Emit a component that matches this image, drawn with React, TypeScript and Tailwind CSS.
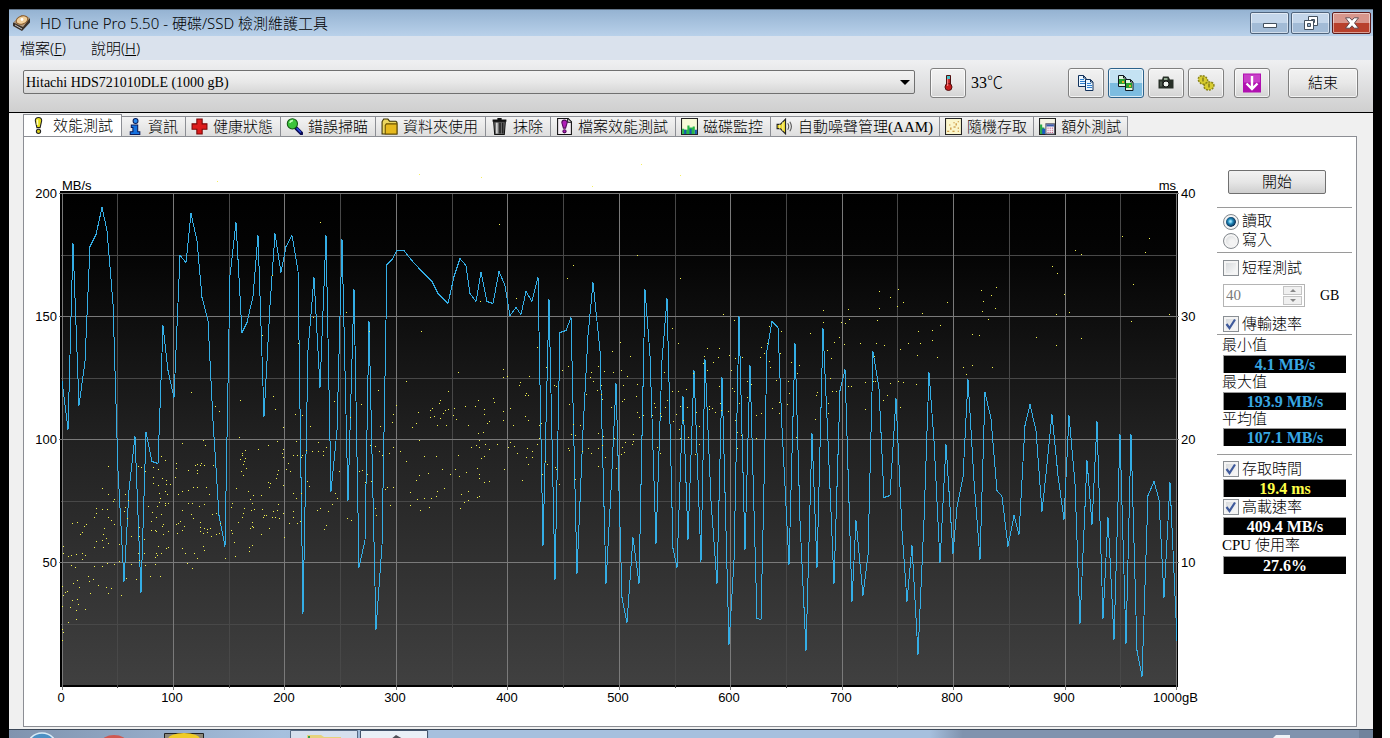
import React, { useState } from 'react';

const sans = "font-['Noto_Sans','Noto_Sans_CJK_TC',sans-serif]";
const serif = "font-light font-['Liberation_Serif','Noto_Sans_CJK_TC',serif]";

const SPEED =
  '62,380 68,429 73,243 79,405 85,361 90,246 96,234 102,207 107,230 113,303 118,470 124,581 129,490 135,436 141,592 146,432 152,461 158,463 163,325 168,370 174,397 180,255 186,262 191,213 197,240 202,297 208,320 213,420 219,515 225,546 230,275 236,222 242,332 247,322 253,296 258,235 264,416 270,305 275,233 281,272 286,246 292,235 298,270 303,613 308,350 314,277 320,387 326,235 331,491 337,430 342,239 348,500 354,289 359,567 365,540 369,321 376,629 382,545 387,264 392,259 397,250 404,250 411,259 421,270 432,281 438,293 448,303 454,276 460,258 466,265 470,293 476,301 481,272 487,301 493,303 499,271 505,285 510,315 516,307 521,314 526,291 532,301 538,277 543,545 549,299 555,579 560,332 566,330 571,317 577,573 583,430 588,335 593,282 600,350 606,583 611,490 616,383 622,597 627,622 633,537 639,583 645,289 650,355 656,543 662,360 667,298 673,548 677,567 683,396 688,539 694,370 701,561 705,359 711,500 717,583 722,377 729,644 734,560 739,316 745,549 750,365 757,618 761,619 767,350 772,321 778,327 782,427 789,564 795,343 800,520 806,650 812,433 817,567 823,328 828,440 834,583 840,390 845,369 852,601 856,520 863,595 868,555 873,351 879,388 884,497 890,495 896,398 902,530 907,601 912,545 918,654 924,520 929,372 934,440 940,562 946,444 953,553 957,507 963,477 968,379 974,480 980,559 985,392 991,418 997,490 1002,496 1008,546 1014,515 1019,534 1025,425 1030,404 1036,430 1042,511 1047,464 1052,414 1058,475 1064,519 1069,415 1075,483 1080,623 1087,460 1092,524 1097,421 1103,618 1108,517 1114,639 1120,434 1126,643 1131,434 1137,650 1142,676 1148,495 1154,481 1159,499 1164,597 1170,482 1177,640';

const ACCESS =
  '63,546 63,553 68,556 71,555 76,554 72,523 77,522 80,534 82,532 84,526 86,524 82,553 85,555 82,559 71,565 75,567 94,517 96,508 96,513 102,509 107,509 108,517 111,520 114,524 102,488 108,466 108,494 113,501 114,499 104,528 103,534 106,538 108,543 96,541 94,547 102,540 103,547 88,576 93,579 89,581 98,585 94,566 102,566 107,563 114,564 77,580 73,583 79,587 90,593 108,593 106,587 111,588 121,595 62,586 63,595 65,592 67,591 62,606 70,607 72,600 77,599 78,604 76,610 85,609 76,619 68,622 62,629 63,632 62,640 ' +
  '125,494 125,507 124,511 127,518 128,500 119,544 131,536 131,564 119,561 126,578 136,579 138,466 141,467 145,471 139,527 139,536 144,539 138,553 144,553 139,560 145,565 150,576 155,564 160,576 155,557 157,555 156,553 161,553 158,546 166,548 168,547 151,530 155,530 156,531 163,534 163,524 162,526 168,531 151,521 152,512 156,517 161,514 148,506 157,506 159,502 160,498 165,503 165,505 168,503 167,494 165,491 159,493 158,485 162,478 166,480 166,484 170,484 161,456 165,460 158,469 153,483 153,477 153,467 ' +
  '182,443 176,463 176,468 175,477 188,470 195,465 197,464 200,465 201,463 204,465 197,470 197,473 203,440 205,445 213,465 188,490 193,487 197,487 206,487 209,494 182,491 178,494 188,503 192,503 199,506 204,504 182,510 180,521 178,523 184,526 176,524 182,530 177,533 191,514 193,518 200,522 200,527 204,528 207,529 210,528 207,532 200,531 203,533 212,514 216,513 220,523 219,533 182,548 185,553 194,553 203,546 204,550 197,558 187,563 192,568 211,536 216,534 225,558 235,556 ' +
  '239,437 245,450 242,453 242,455 245,458 240,459 244,461 243,464 246,468 241,471 243,475 258,449 268,445 277,441 283,449 282,453 283,457 278,470 277,474 276,478 268,482 270,483 269,487 283,485 236,488 248,491 253,495 261,495 250,499 252,503 232,503 231,507 254,509 251,510 244,508 243,513 242,517 238,522 252,522 252,526 250,528 253,527 264,515 266,515 263,517 262,509 272,517 275,517 273,511 277,510 278,504 279,518 283,513 261,534 269,528 284,537 249,547 252,545 249,551 231,530 232,533 234,542 ' +
  '289,523 297,523 300,521 293,517 293,511 286,469 290,471 297,455 293,455 288,463 296,441 302,455 301,457 306,450 312,451 293,493 296,498 301,493 307,481 318,442 318,451 323,451 323,455 326,447 309,486 317,510 320,508 328,511 324,529 326,525 337,498 335,493 339,471 332,504 347,518 351,520 359,471 362,470 367,474 365,482 371,481 370,445 375,446 379,451 375,508 376,515 385,489 387,487 393,487 390,505 382,455 389,453 393,447 ' +
  '400,451 406,461 419,440 424,456 436,456 416,480 419,475 428,473 442,469 450,474 455,469 459,476 466,472 458,455 410,492 410,505 417,499 420,510 424,498 429,507 431,498 436,496 437,491 444,488 461,494 468,491 468,500 464,502 460,508 477,497 479,496 479,478 484,482 489,481 479,474 477,468 504,469 522,480 481,458 484,456 489,449 485,444 479,447 476,445 471,447 479,440 497,444 508,447 510,442 514,446 517,453 527,448 526,457 532,451 532,457 528,464 537,444 539,438 542,474 545,461 547,464 555,467 556,469 559,484 568,448 569,450 575,479 582,451 588,448 591,453 598,448 598,466 605,457 602,445 616,468 621,454 624,452 622,447 625,442 632,444 633,441 571,434 575,435 598,433 603,436 633,434 614,438 657,447 660,453 680,438 688,437 695,454 699,444 737,448 737,432 741,435 756,438 796,437 ' +
  '499,224 346,312 369,331 421,331 480,301 516,298 567,278 573,265 637,255 537,347 546,367 562,370 568,366 458,372 503,369 503,377 507,376 529,376 520,382 519,385 526,393 528,395 525,395 406,381 378,390 448,391 440,400 439,403 432,408 430,410 434,416 430,417 440,418 443,413 445,410 448,409 454,408 453,415 456,419 465,406 475,406 478,400 484,409 484,414 493,398 494,402 489,421 487,423 503,411 503,420 510,408 513,425 525,416 528,420 418,412 416,423 412,427 396,405 393,414 392,422 380,426 361,404 350,417 334,401 437,425 446,425 468,425 478,433 483,432 ' +
  '554,385 556,386 569,404 573,424 580,425 586,394 590,377 591,372 593,381 598,366 604,371 613,372 612,351 620,342 630,356 621,370 627,376 623,385 637,384 636,396 624,399 622,401 611,407 597,390 601,385 601,394 602,399 637,412 639,417 643,415 652,415 654,403 655,407 660,413 661,416 665,407 667,400 664,372 672,328 678,343 672,391 678,391 676,414 541,423 539,425 ' +
  '680,278 723,314 734,320 707,348 719,348 718,357 713,362 704,356 703,363 707,370 693,373 729,355 735,358 742,357 731,370 686,389 719,386 732,388 734,391 747,381 751,384 747,397 761,347 764,353 760,357 767,343 769,326 781,331 780,353 769,361 770,367 776,380 788,381 789,393 787,404 779,402 779,413 772,408 761,413 756,415 791,362 799,365 797,373 810,333 823,310 823,322 827,350 831,358 834,342 839,337 844,344 841,322 845,323 848,309 849,319 860,343 877,320 879,308 879,291 890,297 898,289 897,306 903,302 876,343 884,345 900,349 908,343 918,331 920,343 917,355 922,313 932,330 932,340 940,325 947,302 937,357 865,382 873,381 875,381 890,383 898,381 903,382 916,384 887,395 883,400 865,409 900,407 874,356 830,378 832,391 836,391 848,386 851,386 817,392 816,395 828,403 828,413 815,419 963,367 966,374 972,365 972,334 979,335 981,290 983,301 982,311 988,319 709,406 709,409 712,408 715,412 728,411 720,403 721,410 739,403 735,420 699,426 696,412 687,407 680,406 676,414 683,420 679,429 673,421 ' +
  '996,287 991,295 995,308 992,367 1036,337 1056,314 1056,345 1052,266 1057,273 1064,294 1069,312 1075,250 1081,254 1081,338 1122,236 1149,238 1145,252 1133,284 1131,321 1169,314 320,222 272,275 313,317 262,335 298,343 191,392 240,400 215,406 219,411 273,396 275,409 295,414 302,415 310,426 283,427 334,401';

const OUTLIERS = '419,174 481,177 592,186 641,164 217,181 680,175';

const dots = (list: string) =>
  list
    .split(' ')
    .filter(Boolean)
    .map((p) => `M${p.replace(',', ' ')}h1v1h-1z`)
    .join('');

const XS = Array.from({ length: 21 }, (_, i) => Math.round(61.5 + i * 55.73));
const YS = Array.from({ length: 9 }, (_, i) => Math.round(193 + i * 61.5));

function Chart() {
  return (
    <svg viewBox="24 137 1193 589" className="block h-auto w-full" role="img" aria-label="MB/s, ms">
      <defs>
        <linearGradient id="plot" x1="0" y1="0" x2="0" y2="1">
          <stop offset="0" stopColor="#000" />
          <stop offset="0.12" stopColor="#040404" />
          <stop offset="0.5" stopColor="#212121" />
          <stop offset="1" stopColor="#404040" />
        </linearGradient>
      </defs>
      <g shapeRendering="crispEdges">
        <rect x="60" y="191" width="1118" height="496" fill="#000" />
        <rect x="62" y="193" width="1114" height="492" fill="url(#plot)" />
        {XS.map((x, i) => (i % 2 ? <rect key={x} x={x} y="193" width="1" height="495" fill="#484848" /> : null))}
        {YS.map((y, i) => (i % 2 ? <rect key={y} x="61" y={y} width="1116" height="1" fill="#484848" /> : null))}
        {XS.map((x, i) => (i % 2 ? null : <rect key={x} x={x} y="193" width="1" height="497" fill="#7a7a7a" />))}
        {YS.map((y, i) => (i % 2 || i === 8 ? null : <rect key={y} x="59" y={y} width="1120" height="1" fill="#7a7a7a" />))}
        <polyline points={SPEED} transform="translate(0 .5)" fill="none" stroke="#34aee6" strokeWidth="1" />
        <path d={dots(ACCESS)} fill="#f6f650" />
        <path d={dots(OUTLIERS)} fill="#f6f060" />
      </g>
      <g className="font-['Liberation_Sans',sans-serif] text-[13px]" fill="#000">
        <text x="62" y="190">MB/s</text>
        <text x="1176" y="190" textAnchor="end">ms</text>
        {[200, 150, 100, 50].map((v, i) => (
          <text key={v} x="57" y={198 + i * 123} textAnchor="end">{v}</text>
        ))}
        {[40, 30, 20, 10].map((v, i) => (
          <text key={v} x="1181" y={198 + i * 123}>{v}</text>
        ))}
        {Array.from({ length: 10 }, (_, i) => (
          <text key={i} x={61 + Math.round(i * 111.4)} y="702" textAnchor="middle">{i * 100}</text>
        ))}
        <text x="1153" y="702">1000gB</text>
      </g>
    </svg>
  );
}

const tabIcons: Record<string, React.ReactNode> = {
  bulb: (
    <>
      <path d="M5 3.500C5 1.500 6.500 .5 8 .5s3 1 3 3L9.500 10h-3z" fill="#e9e01c" stroke="#222" />
      <path d="M7 2.500v5" stroke="#fffcc0" strokeWidth="1.500" />
      <circle cx="8" cy="13.500" r="2" fill="#d8cc18" stroke="#222" />
    </>
  ),
  info: (
    <>
      <circle cx="9" cy="2.800" r="2.300" fill="#2b8cf0" stroke="#0a1c5a" />
      <path d="M5 6.500h6v6.500h2v2.500H4V13h2.500V9H5z" fill="#1672e0" stroke="#0a1c5a" />
    </>
  ),
  cross: <path d="M5.500 1h5v4.500H15v5h-4.500V15h-5v-4.500H1v-5h4.500z" fill="#dd1c1c" stroke="#7a0808" />,
  search: (
    <>
      <path d="M9.500 9.500l5 5" stroke="#0a0a50" strokeWidth="3.500" strokeLinecap="round" />
      <path d="M10 9.500l4 4" stroke="#2d48d8" strokeWidth="1.500" />
      <circle cx="6" cy="5.500" r="4.800" fill="#3cc43c" stroke="#145a14" />
      <path d="M3.500 4.500a3 3 0 0 1 3-2" stroke="#c8ffc0" strokeWidth="1.500" fill="none" />
    </>
  ),
  folder: (
    <>
      <path d="M1 3.500L2.500 1h4L8 3h6l1 1v11H1z" fill="#ecd760" stroke="#3a3000" />
      <path d="M5 5.500h10V15H4V7z" fill="#e6b91e" stroke="#6a5200" />
    </>
  ),
  trash: (
    <>
      <path d="M2.500 3.500h11L12.500 15.500h-9z" fill="#707070" stroke="#111" />
      <path d="M1.500 2.500h13M6 .8h4" stroke="#111" strokeWidth="2" />
      <path d="M5.500 4.500v10" stroke="#d8d8d8" strokeWidth="1.500" />
      <path d="M8.500 4.500v10M11 4.500v10" stroke="#222" strokeWidth="1.500" />
    </>
  ),
  file: (
    <>
      <path d="M1.500.5h10l3 3v12h-13z" fill="#f5eef5" stroke="#111" />
      <path d="M11 .5v3.500h3.500" fill="none" stroke="#111" />
      <path d="M5.500 4.500a2.500 2.500 0 0 1 5 0L9 9.500H7z" fill="#b01cb8" stroke="#500858" />
      <circle cx="8" cy="12.500" r="1.500" fill="#b01cb8" stroke="#500858" />
    </>
  ),
  monitor: (
    <>
      <path d="M.5.5h15v15H.5z" fill="#f8fbd8" stroke="#222" />
      <path d="M1 15V10h2v1h3v4zM6 15V7h2v2h3v6zM11 15V8h2v7z" fill="#28b848" />
      <path d="M3 15v-4h2v4zM8 15v-5h2v5zM13 15v-4h2v4z" fill="#1858b0" />
    </>
  ),
  speaker: (
    <>
      <path d="M1 6h3l5-5v14l-5-5H1z" fill="#e8d428" stroke="#222" />
      <path d="M3.500 6v4M6.500 4v8" stroke="#fff8a0" />
      <path d="M11 5q2 3 0 6M13 3.500q3 4.500 0 9" fill="none" stroke="#555" />
    </>
  ),
  random: (
    <>
      <path d="M.5.5h15v15H.5z" fill="#fbf6cc" stroke="#222" />
      <path d="M2 12h2v1H2zM5 9h1v2H5zM4 6h1v1H4zM8 8h2v1H8zM10 5h1v2h-1zM7 12h2v1H7zM12 9h1v1h-1zM12 3h1v1h-1zM8 4h1v1H8zM12 12h1v1h-1z" fill="#c08020" />
    </>
  ),
  extra: (
    <>
      <path d="M.5.5h15v15H.5z" fill="#f4f4e4" stroke="#222" />
      <path d="M1 15V6h2v3h2v6z" fill="#28a848" />
      <path d="M3 15v-5h3v5z" fill="#1858c0" />
      <path d="M6.500 5.500h8v9.500h-8z" fill="#fff" stroke="#556" />
      <path d="M7 6h7v2H7z" fill="#3858a8" />
      <path d="M8 9.500h6M8 11.500h6M8 13.500h6" stroke="#b84878" strokeDasharray="1 1" />
    </>
  ),
};

const TABS: [string, string][] = [
  ['info', '資訊'],
  ['cross', '健康狀態'],
  ['search', '錯誤掃瞄'],
  ['folder', '資料夾使用'],
  ['trash', '抹除'],
  ['file', '檔案效能測試'],
  ['monitor', '磁碟監控'],
  ['speaker', '自動噪聲管理(AAM)'],
  ['random', '隨機存取'],
  ['extra', '額外測試'],
];

function TabIcon({ name }: { name: string }) {
  return (
    <svg viewBox="0 0 16 16" className="h-[17px] w-[17px] shrink-0" aria-hidden="true">
      {tabIcons[name]}
    </svg>
  );
}

function ToolButton({ label, active, children }: { label: string; active?: boolean; children: React.ReactNode }) {
  return (
    <button
      aria-label={label}
      className={
        'flex h-[30px] w-9 shrink-0 items-center justify-center rounded-[3px] border shadow-[inset_0_0_0_1px_rgba(255,255,255,0.7)] ' +
        (active
          ? 'border-[#2c628b] bg-linear-to-b from-[#c4e2f3] from-50% to-[#7cbce0] to-50%'
          : 'border-[#808080] bg-linear-to-b from-[#f2f2f2] via-[#e8e8e8] to-[#d4d4d4]')
      }
    >
      <svg viewBox="0 0 20 20" className="h-5 w-5" aria-hidden="true">
        {children}
      </svg>
    </button>
  );
}

function Page({ x, y, image }: { x: number; y: number; image?: boolean }) {
  return (
    <g transform={`translate(${x} ${y})`}>
      <path d="M.5.5h5l2.500 2.500v8.500H.5z" fill={image ? '#e0f4e0' : '#eaf6ff'} stroke={image ? '#101820' : '#12325c'} />
      <path d="M5.500.5V3H8" fill="none" stroke={image ? '#101820' : '#12325c'} />
      {image ? (
        <>
          <path d="M1 4h6v5H1z" fill="#28a030" />
          <path d="M4 6h2v2H4z" fill="#e0b020" />
        </>
      ) : (
        <path d="M2 4.500h4M2 6.500h5M2 8.500h5" stroke="#2f7fd0" />
      )}
    </g>
  );
}

function Check({ label, defaultChecked }: { label: string; defaultChecked?: boolean }) {
  return (
    <label className="flex h-5 items-center gap-[3px] pl-[6px]">
      <span className="grid h-4 w-4 shrink-0">
        <input
          type="checkbox"
          defaultChecked={defaultChecked}
          className="peer col-start-1 row-start-1 h-4 w-4 appearance-none border border-[#8a8f94] bg-linear-to-br from-[#d2d5d8] to-white shadow-[inset_0_0_0_2px_#f4f4f4]"
        />
        <svg viewBox="0 0 16 16" className="pointer-events-none invisible col-start-1 row-start-1 h-4 w-4 peer-checked:visible" aria-hidden="true">
          <path d="M3.500 8l3 4 5.500-8.500" fill="none" stroke="#3f5a9c" strokeWidth="2.200" />
        </svg>
      </span>
      {label}
    </label>
  );
}

function Radio({ label, checked, onChange }: { label: string; checked: boolean; onChange: () => void }) {
  return (
    <label className="flex h-[19px] items-center gap-[3px] pl-[6px]">
      <input
        type="radio"
        name="mode"
        checked={checked}
        onChange={onChange}
        className="h-4 w-4 shrink-0 appearance-none rounded-full border border-[#858a8f] bg-[radial-gradient(circle_at_60%_60%,#f4f4f4_20%,#cfd2d4_90%)] shadow-[inset_0_0_0_2px_#f4f4f4] checked:bg-[radial-gradient(circle_at_46%_46%,#9fe4ff_0_6%,#1c86b8_24%,#0d2f55_48%,#dfe9ef_56%)]"
      />
      {label}
    </label>
  );
}

function Value({ color, children }: { color: string; children: React.ReactNode }) {
  return (
    <output className={'mr-[6px] ml-[6px] block h-[18px] border-t border-l border-[#9a9a9a] bg-black text-center text-[16px] leading-[17px] font-bold ' + color}>
      {children}
    </output>
  );
}

function Sidebar() {
  const [mode, setMode] = useState('read');
  return (
    <aside className="mr-1 w-[135px] shrink-0 pt-[33px] text-[15px] leading-[19px]">
      <button className="ml-[11px] block h-6 w-[98px] rounded-[2px] border border-[#707070] bg-linear-to-b from-[#f2f2f2] via-[#e6e6e6] to-[#cfcfcf] leading-[20px]">
        開始
      </button>
      <div className="mt-[13px] border-t border-[#9a9a9a] pt-1 pb-[2px]">
        <Radio label="讀取" checked={mode === 'read'} onChange={() => setMode('read')} />
        <Radio label="寫入" checked={mode === 'write'} onChange={() => setMode('write')} />
      </div>
      <div className="border-t border-[#9a9a9a] pt-[5px]">
        <Check label="短程測試" />
        <div className="mt-[6px] mb-[7px] flex items-center pl-[6px]">
          <div className="flex h-[23px] w-[82px] items-center border border-[#b4b4b4] pr-[2px] pl-[2px]">
            <input aria-label="GB" type="text" defaultValue="40" disabled className="w-0 min-w-0 grow text-[#7a7a7a]" />
            <span className="flex w-[19px] flex-col gap-px">
              {['M4 0l3 3H1z', 'M4 3l3-3H1z'].map((d, i) => (
                <button key={d} disabled aria-label={i ? '−' : '+'} className="flex h-[9px] items-center justify-center border border-[#c4c4c4] bg-[#f0f0f0]">
                  <svg viewBox="0 0 8 3" className="h-[3px] w-2" aria-hidden="true"><path d={d} fill="#888" /></svg>
                </button>
              ))}
            </span>
          </div>
          <span className="ml-[15px] text-[14px]">GB</span>
        </div>
        <Check label="傳輸速率" defaultChecked />
      </div>
      <div className="border-t border-[#9a9a9a] pt-px">
        <p className="h-[19px] pl-[5px]">最小值</p>
        <Value color="text-[#38a8e4]">4.1 MB/s</Value>
        <p className="h-[19px] pl-[5px]">最大值</p>
        <Value color="text-[#38a8e4]">193.9 MB/s</Value>
        <p className="h-[18px] pl-[5px]">平均值</p>
        <Value color="text-[#38a8e4]">107.1 MB/s</Value>
      </div>
      <div className="mt-2 border-t border-[#9a9a9a] pt-1">
        <Check label="存取時間" defaultChecked />
        <Value color="text-[#ffff48]">19.4 ms</Value>
        <Check label="高載速率" defaultChecked />
        <Value color="text-white">409.4 MB/s</Value>
        <p className="h-[21px] pt-px pl-[5px]">CPU 使用率</p>
        <Value color="text-white">27.6%</Value>
      </div>
    </aside>
  );
}

const winBtn =
  'flex h-[22px] w-[39px] items-center justify-center rounded-[2px] border shadow-[inset_0_0_0_1px_rgba(255,255,255,0.5)]';
const winBlue = ' border-[#50647c] bg-linear-to-b from-[#c4d6ea] from-50% to-[#a2bbd6] to-50%';

export default function App() {
  return (
    <div className="min-h-screen bg-white pr-2">
      <div className="min-h-screen bg-black px-[9px] pt-[9px]">
        <div className="flex flex-col bg-[#f0f0f0] text-black">
          <header className={'flex h-[27px] items-center border-t border-[#63758a] bg-linear-to-b from-[#95b3d2] to-[#b9d1ea] pr-[2px] pl-[3px] font-light ' + sans}>
            <svg viewBox="0 0 20 18" className="mr-[8px] h-[18px] w-5" aria-hidden="true">
              <path d="M1 9L10 1l8 3.500v4L10 17 1 12z" fill="#3a3028" />
              <path d="M1.500 8.500L10 1l8 3-7 9z" fill="#b09a80" />
              <ellipse cx="10" cy="6" rx="6" ry="4" transform="rotate(-20 10 6)" fill="#f0cf9c" stroke="#8a5c2c" />
              <circle cx="10" cy="5.500" r="1.400" fill="#fff" />
              <path d="M3 11l7 4" stroke="#c0c0c0" />
            </svg>
            <h1 className="grow text-[15px] leading-5">HD Tune Pro 5.50 - 硬碟/SSD 檢測維護工具</h1>
            <div className="flex gap-[2px]">
              <button aria-label="最小化" className={winBtn + winBlue}>
                <svg viewBox="0 0 14 14" className="h-[14px] w-[14px]"><path d="M.5 7.500h13v4H.5z" fill="#fff" stroke="#43505e" /></svg>
              </button>
              <button aria-label="還原" className={winBtn + winBlue}>
                <svg viewBox="0 0 16 16" className="h-4 w-4">
                  <path d="M5.500 1.500h9v9h-9z" fill="#fff" stroke="#43505e" />
                  <path d="M8.500 4.500h3v3h-3z" fill="#b6cce2" stroke="#43505e" />
                  <path d="M1.500 5.500h9v9h-9z" fill="#fff" stroke="#43505e" />
                  <path d="M4.500 8.500h3v3h-3z" fill="#9ab4d0" stroke="#43505e" />
                </svg>
              </button>
              <button aria-label="關閉" className={winBtn + ' border-[#5c1c1c] bg-linear-to-b from-[#d8968c] from-50% to-[#b8402c] to-50%'}>
                <svg viewBox="0 0 14 12" className="h-3 w-[14px]">
                  <path d="M.5.8h4.300L7 3.200 9.200.8h4.300L9.500 6l4 5.200H9.200L7 8.800 4.800 11.200H.5l4-5.200z" fill="#fff" stroke="#54424a" strokeWidth=".9" />
                </svg>
              </button>
            </div>
          </header>

          <nav className={'flex h-6 items-center gap-[25px] bg-[#dae2ed] pl-[11px] text-[15px] leading-5 font-light ' + sans}>
            <button>檔案(<u>F</u>)</button>
            <button>說明(<u>H</u>)</button>
          </nav>

          <div className={'flex h-[53px] border-b border-black bg-linear-to-b from-[#eff0f2] to-[#cfcfcf] pt-2 pr-[15px] pl-[14px] text-[15px] ' + serif}>
            <div className="mt-[2px] grid h-6 min-w-0 grow">
              <select
                aria-label="Hitachi HDS721010DLE (1000 gB)"
                className="col-start-1 row-start-1 h-6 appearance-none rounded-[2px] border border-[#707070] bg-linear-to-b from-[#f2f2f2] via-[#e8e8e8] to-[#d6d6d6] pl-[2px] text-[14px]"
              >
                <option>Hitachi HDS721010DLE (1000 gB)</option>
              </select>
              <svg viewBox="0 0 10 5" className="pointer-events-none col-start-1 row-start-1 mr-[5px] h-[5px] w-[10px] self-center justify-self-end" aria-hidden="true">
                <path d="M0 0h10L5 5z" />
              </svg>
            </div>
            <div className="ml-[15px] flex shrink-0">
              <ToolButton label="溫度">
                <path d="M8.500 2.500h4V12h-4z" fill="#c02020" stroke="#501010" />
                <path d="M9 3h3v3H9z" fill="#48c0c8" />
                <circle cx="10.500" cy="14" r="3.500" fill="#c81c1c" stroke="#501010" />
                <path d="M9.700 6v7" stroke="#ff9090" />
              </ToolButton>
              <span className="ml-[5px] w-[97px] text-[16px] leading-[30px]">33℃</span>
            </div>
            <div className="flex shrink-0 gap-1">
              <ToolButton label="複製文字"><Page x={2} y={2} /><Page x={9} y={6} /></ToolButton>
              <ToolButton label="複製圖像" active><Page x={2} y={2} image /><Page x={9} y={6} image /></ToolButton>
              <ToolButton label="螢幕擷取">
                <path d="M7 3.500h5.500l1.500 3h3.500v9h-15v-9H6z" fill="#283028" />
                <path d="M8 5h3.500v2H8z" fill="#90a890" />
                <circle cx="10" cy="11" r="3" fill="#f0f4f0" stroke="#111" />
                <path d="M5 8.500v5" stroke="#788478" />
              </ToolButton>
              <ToolButton label="選項">
                <g stroke="#8a8418" fill="#d8cc30">
                  <ellipse cx="7" cy="7" rx="5" ry="4" transform="rotate(35 7 7)" strokeWidth="1.500" strokeDasharray="2 1" />
                  <ellipse cx="13" cy="13" rx="5" ry="4" transform="rotate(-15 13 13)" strokeWidth="1.500" strokeDasharray="2 1" />
                  <path d="M7 4.500v4M13 10.500v4" fill="none" stroke="#5a5410" />
                </g>
              </ToolButton>
            </div>
            <div className="ml-[10px] shrink-0">
              <ToolButton label="儲存">
                <path d="M1 .5h18v19H1z" fill="#b010b0" />
                <path d="M2 1.500h16v8H2z" fill="#c840c8" />
                <path d="M10 3v13M4.500 10.500L10 16l5.500-5.500" fill="none" stroke="#fff" strokeWidth="2.400" />
              </ToolButton>
            </div>
            <button className="ml-[18px] h-[30px] w-[70px] shrink-0 rounded-[3px] border border-[#808080] bg-linear-to-b from-[#f2f2f2] via-[#e8e8e8] to-[#d4d4d4] shadow-[inset_0_0_0_1px_rgba(255,255,255,0.7)]">
              結束
            </button>
          </div>

          <div role="tablist" className={'flex h-[23px] items-end pl-[14px] text-[15px] leading-[18px] whitespace-nowrap ' + serif}>
            <button role="tab" aria-selected="true" className="flex h-[22px] w-[99px] shrink-0 items-center gap-[6px] border border-b-0 border-[#8c8e94] bg-white pl-[6px]">
              <TabIcon name="bulb" />
              效能測試
            </button>
            {TABS.map(([icon, text]) => (
              <button
                key={text}
                role="tab"
                aria-selected="false"
                className="flex h-5 shrink-0 items-center gap-[5px] border-t border-r border-[#8c8e94] bg-linear-to-b from-[#f4f4f4] to-[#dedede] pr-[7px] pl-[4px] first-of-type:pl-[6px] nth-[n+3]:pl-[5px] nth-[n+9]:pr-[6px]"
              >
                <TabIcon name={icon} />
                {text}
              </button>
            ))}
          </div>

          <main className={'mr-4 ml-[14px] flex border border-[#8c8e94] bg-white ' + serif}>
            <div className="min-w-0 grow">
              <Chart />
            </div>
            <Sidebar />
          </main>

          <footer className="mt-[2px] flex h-[9px] items-start overflow-hidden border-t border-[#3c4858] bg-linear-to-r from-[#8093ae] via-[#a6c0de] via-20% to-[#8093ae] to-75%">
            <svg viewBox="9 730 420 8" className="h-2 w-[420px] shrink-0" aria-hidden="true">
              <circle cx="42" cy="748" r="15" fill="#4c90c4" stroke="#d8ecf8" strokeWidth="1.500" />
              <ellipse cx="114" cy="743" rx="13" ry="8" fill="#d05850" />
              <path d="M164.500 733.500h39v8h-39z" fill="#8c8878" stroke="#222" />
              <ellipse cx="184" cy="739" rx="16" ry="6" fill="#f0cc28" />
              <path d="M290.500 730.500h67v12h-67z" fill="#d6e0ee" stroke="#566a84" />
              <path d="M307 735h14l3 2h17v4h-34z" fill="#e6d27c" />
              <path d="M309 736v4" stroke="#38a048" strokeWidth="2" />
              <path d="M360.500 730.500h67v12h-67z" fill="#eaf0f7" stroke="#43546c" />
              <path d="M390 740l6-5 7 4z" fill="#505058" />
            </svg>
            <span className="h-2 grow bg-linear-to-r from-[#a6c0de] from-60% to-[#8093ae] to-64%" />
            <svg viewBox="0 0 110 8" className="h-2 w-[110px] shrink-0 bg-[#8093ae]" aria-hidden="true">
              <path d="M10 8l3-3h14v3z" fill="#eef2f6" />
              <path d="M96 0h14v8H96z" fill="#70839c" />
            </svg>
          </footer>
        </div>
      </div>
    </div>
  );
}
